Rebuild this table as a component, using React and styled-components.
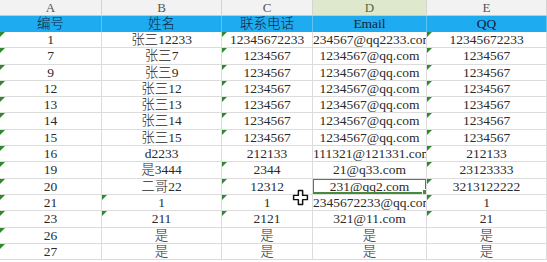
import React from 'react';
import styled, { createGlobalStyle } from 'styled-components';

const GlobalStyle = createGlobalStyle`
  html, body {
    margin: 0;
    padding: 0;
    background: #fff;
    overflow: hidden;
  }
`;

const columns = ['A', 'B', 'C', 'D', 'E'];
const heads = ['编号', '姓名', '联系电话', 'Email', 'QQ'];

// marks: which cells show the green "number stored as text" corner
const rows = [
  { cells: ['1', '张三12233', '12345672233', '234567@qq2233.com', '12345672233'], marks: [1, 0, 1, 0, 1] },
  { cells: ['7', '张三7', '1234567', '1234567@qq.com', '1234567'], marks: [1, 0, 1, 0, 1] },
  { cells: ['9', '张三9', '1234567', '1234567@qq.com', '1234567'], marks: [1, 0, 1, 0, 1] },
  { cells: ['12', '张三12', '1234567', '1234567@qq.com', '1234567'], marks: [1, 0, 1, 0, 1] },
  { cells: ['13', '张三13', '1234567', '1234567@qq.com', '1234567'], marks: [1, 0, 1, 0, 1] },
  { cells: ['14', '张三14', '1234567', '1234567@qq.com', '1234567'], marks: [1, 0, 1, 0, 1] },
  { cells: ['15', '张三15', '1234567', '1234567@qq.com', '1234567'], marks: [1, 0, 1, 0, 1] },
  { cells: ['16', 'd2233', '212133', '111321@121331.com', '212133'], marks: [1, 0, 0, 0, 1] },
  { cells: ['19', '是3444', '2344', '21@q33.com', '23123333'], marks: [1, 0, 1, 0, 1] },
  { cells: ['20', '二哥22', '12312', '231@qq2.com', '3213122222'], marks: [1, 0, 1, 0, 1], selected: 3 },
  { cells: ['21', '1', '1', '2345672233@qq.com', '1'], marks: [1, 1, 1, 0, 1] },
  { cells: ['23', '211', '2121', '321@11.com', '21'], marks: [1, 1, 1, 0, 1] },
  { cells: ['26', '是', '是', '是', '是'], marks: [1, 0, 0, 0, 0] },
  { cells: ['27', '是', '是', '是', '是'], marks: [1, 0, 0, 0, 0] },
];

const splitRuns = (text) =>
  text.split(/([\u4e00-\u9fff]+)/).filter(Boolean).map((part, i) =>
    /[\u4e00-\u9fff]/.test(part) ? <Cjk key={i}>{part}</Cjk> : <span key={i}>{part}</span>
  );

const App = () => (
  <>
    <GlobalStyle />
    <Sheet>
      <Grid>
        {columns.map((c, i) => (
          <ColHead key={c} $active={i === 3}>{c}</ColHead>
        ))}
        {heads.map((h) => (
          <TitleCell key={h}>{splitRuns(h)}</TitleCell>
        ))}
        {rows.map((row, r) =>
          row.cells.map((v, c) => (
            <Cell key={`${r}-${c}`} $mark={row.marks[c]}>
              {splitRuns(v)}
              {row.selected === c && <Selection />}
            </Cell>
          ))
        )}
      </Grid>
      <Cursor width="17" height="17" viewBox="0 0 16 16">
        <path
          d="M6 1.5h4v4.5h4.5v4H10v4.5H6V10H1.5V6H6z"
          fill="#fff"
          stroke="#111"
          strokeWidth="1.4"
          strokeLinejoin="round"
        />
      </Cursor>
    </Sheet>
  </>
);

export default App;

const Sheet = styled.div`
  position: relative;
  width: 547px;
  height: 262px;
  overflow: hidden;
  background: #fff;
`;

const Grid = styled.div`
  display: grid;
  grid-template-columns: 102px 120px 91px 114px 120px;
  grid-template-rows: 16px 16px repeat(14, 16.3px);
`;

const ColHead = styled.div`
  background: ${(p) => (p.$active ? '#dde8cc' : '#f2f2f2')};
  color: ${(p) => (p.$active ? '#4d6b3a' : '#555')};
  border-right: 1px solid #d4d4d4;
  border-bottom: 1px solid #c8c8c8;
  font-family: "Liberation Serif", serif;
  font-size: 13px;
  line-height: 15px;
  text-align: center;
`;

const TitleCell = styled.div`
  background: #1fabf0;
  color: #10243a;
  border-right: 1px solid #5cc3f3;
  font-family: "Liberation Serif", serif;
  font-size: 13.5px;
  line-height: 16px;
  text-align: center;
  white-space: nowrap;
  overflow: hidden;
`;

const Cell = styled.div`
  position: relative;
  border-right: 1px solid #dcdcdc;
  border-bottom: 1px solid #dcdcdc;
  color: #2a2a2a;
  font-family: "Liberation Serif", serif;
  font-size: 13.5px;
  line-height: 15.3px;
  text-align: center;
  white-space: nowrap;
  overflow: hidden;

  &::before {
    content: '';
    display: ${(p) => (p.$mark ? 'block' : 'none')};
    position: absolute;
    left: 0;
    top: 0;
    border-top: 5px solid #2f8a2f;
    border-right: 5px solid transparent;
  }
`;

const Cjk = styled.span`
  font-family: "Noto Sans CJK SC", sans-serif;
  font-size: 13.5px;
  font-weight: 300;
  line-height: 1;
`;

const Selection = styled.span`
  position: absolute;
  inset: -1px -1px 0 -1px;
  border: 2px solid #468a3c;

  &::after {
    content: '';
    position: absolute;
    right: -3px;
    bottom: -3px;
    width: 4px;
    height: 4px;
    background: #468a3c;
    border: 1px solid #fff;
  }
`;

const Cursor = styled.svg`
  position: absolute;
  left: 292px;
  top: 189px;
`;
